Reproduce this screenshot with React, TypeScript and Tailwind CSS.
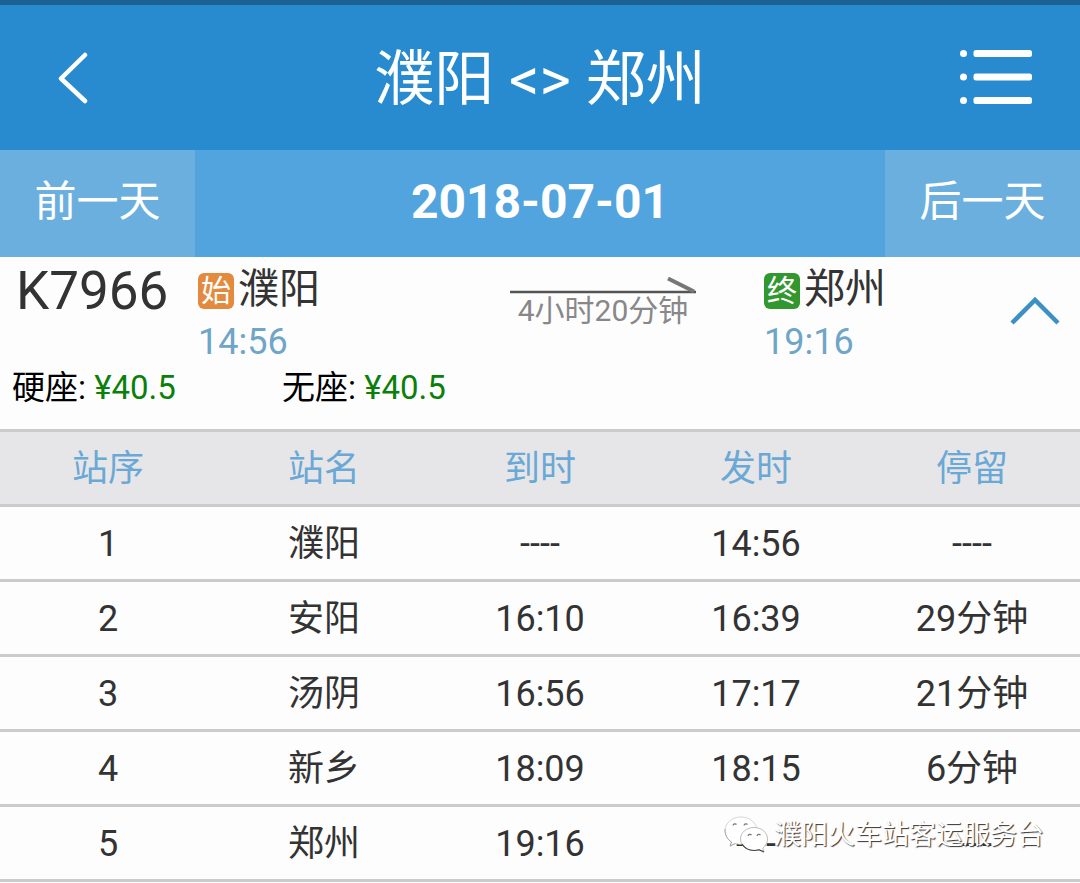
import { useState } from "react";

type Stop = {
  order: number;
  name: string;
  arrive: string;
  depart: string;
  stay: string;
};

const columns = ["站序", "站名", "到时", "发时", "停留"];

const stops: Stop[] = [
  { order: 1, name: "濮阳", arrive: "----", depart: "14:56", stay: "----" },
  { order: 2, name: "安阳", arrive: "16:10", depart: "16:39", stay: "29分钟" },
  { order: 3, name: "汤阴", arrive: "16:56", depart: "17:17", stay: "21分钟" },
  { order: 4, name: "新乡", arrive: "18:09", depart: "18:15", stay: "6分钟" },
  { order: 5, name: "郑州", arrive: "19:16", depart: "----", stay: "----" },
];

const seats = [
  { type: "硬座", price: "¥40.5" },
  { type: "无座", price: "¥40.5" },
];

function BackIcon() {
  return (
    <svg width="32" height="54" viewBox="0 0 32 54" fill="none" stroke="currentColor" strokeWidth="4.5" strokeLinecap="round" strokeLinejoin="round" aria-hidden="true">
      <path d="M29 4 L5 27.5 L29 50" />
    </svg>
  );
}

function MenuIcon() {
  return (
    <svg width="72" height="56" viewBox="0 0 72 56" fill="currentColor" aria-hidden="true">
      {[0, 23.5, 47].map((y) => (
        <g key={y}>
          <circle cx="3.5" cy={y + 3.5} r="3.5" />
          <rect x="13.5" y={y} width="58.5" height="7" rx="2.5" />
        </g>
      ))}
    </svg>
  );
}

function ArrowIcon() {
  return (
    <svg width="186" height="20" viewBox="0 0 186 20" fill="none" stroke="#555" aria-hidden="true">
      <path d="M0 15 H186" strokeWidth="2.6" />
      <path d="M158 1.5 L184 14.5" stroke="#777" strokeWidth="4" />
    </svg>
  );
}

function WechatIcon() {
  return (
    <svg width="46" height="40" viewBox="0 0 46 40" aria-hidden="true">
      <g fill="#fff" stroke="#999" strokeWidth="0.8" strokeLinejoin="round">
        <path d="M17 2 C8 2 1 8 1 16 C1 20.5 3.5 24.5 7.5 27 L6 31 L11.5 28.5 C13 29 15 29.3 17 29.3 C26 29.3 33 23.5 33 16 C33 8 26 2 17 2 Z" stroke="#ccc" />
        <path d="M30 12.5 C22.5 12.5 16.5 17.5 16.5 24 C16.5 30.5 22.5 35.5 30 35.5 C31.8 35.5 33.5 35.2 35 34.7 L40 37 L38.800 33 C41.500 31 43.500 27.800 43.500 24 C43.500 17.500 37.500 12.500 30 12.500 Z" stroke="#aaa" />
        <path d="M1 14 C1 20.500 3.500 24.500 7.500 27 L6 31 L11.500 28.500" fill="none" />
        <path d="M18 29 C20.500 33 25 35.500 30 35.500 C31.800 35.500 33.500 35.200 35 34.700 L40 37" fill="none" stroke="#444" strokeWidth="1.2" />
      </g>
      <g fill="none" stroke="#777" strokeWidth="1.2">
        <path d="M9 10.500 A2 2 0 0 1 12.500 9.500" />
        <path d="M20 10.500 A2 2 0 0 1 23.500 9.500" />
        <path d="M24 21 A2 2 0 0 1 27.500 20" />
        <path d="M33 21 A2 2 0 0 1 36.500 20" />
      </g>
    </svg>
  );
}

function Station({ badge, badgeColor, name, time }: { badge: string; badgeColor: string; name: string; time: string }) {
  return (
    <div>
      <div className="flex h-[60px] items-end gap-1">
        <span className={`mb-2 flex size-9 items-center justify-center rounded-md text-[30px] leading-9 text-white ${badgeColor}`}>
          {badge}
        </span>
        <span className="text-[41px] leading-[56px] text-[#333]">{name}</span>
      </div>
      <div className="text-4xl leading-[50px] text-[#6fa5c6]">{time}</div>
    </div>
  );
}

export default function App() {
  const [open, setOpen] = useState(true);

  return (
    <div className="relative min-h-screen bg-[#fdfdfd] font-['Roboto','Noto_Sans_CJK_SC',sans-serif]" lang="zh-CN">
      {/* Title bar */}
      <header className="flex h-[150px] items-center border-t-[5px] border-[#1c6193] bg-[#298bcf] pr-12 pl-14 text-white">
        <button type="button" aria-label="返回" className="flex w-16">
          <BackIcon />
        </button>
        <h1 className="flex-1 pt-1 text-center text-6xl leading-none">濮阳 &lt;&gt; 郑州</h1>
        <button type="button" aria-label="菜单" className="flex">
          <MenuIcon />
        </button>
      </header>

      {/* Date switcher */}
      <div className="flex h-[107px] bg-[#52a4df] text-white">
        <button type="button" className="w-[195px] bg-[#6bafdf] pb-1 text-[42px]">
          前一天
        </button>
        <div className="flex flex-1 items-center justify-center pb-1 text-5xl font-bold">2018-07-01</div>
        <button type="button" className="w-[195px] bg-[#6bafdf] pb-1 text-[42px]">
          后一天
        </button>
      </div>

      {/* Train summary */}
      <section className="h-[172px]">
        <div className="flex h-[111px] pr-5 pl-4">
          <h2 className="w-[182px] text-[53px] leading-[68px] text-[#333]">K7966</h2>
          <Station badge="始" badgeColor="bg-[#e48a3e]" name="濮阳" time="14:56" />
          <div className="flex flex-1 flex-col items-end pt-5">
            <div className="mr-[68px] flex flex-col items-center">
              <ArrowIcon />
              <span className="text-3xl leading-7 text-[#888]">4小时20分钟</span>
            </div>
          </div>
          <Station badge="终" badgeColor="bg-[#33972f]" name="郑州" time="19:16" />
          <div className="flex w-[174px] justify-end pt-9">
            <button type="button" aria-label="展开经停站" aria-expanded={open} onClick={() => setOpen(!open)} className="h-9">
              <svg width="50" height="36" viewBox="0 0 50 36" fill="none" stroke="#3d8fc6" strokeWidth="4.5" aria-hidden="true">
                <path d={open ? "M2 30 L25 7 L48 30" : "M2 7 L25 30 L48 7"} />
              </svg>
            </button>
          </div>
        </div>
        <div className="flex pl-3 text-[33px] leading-10 text-black">
          {seats.map((seat) => (
            <div key={seat.type} className="w-[270px]">
              {seat.type}: <span className="text-[#0a800a]">{seat.price}</span>
            </div>
          ))}
        </div>
      </section>

      {/* Stops */}
      {open && (
        <table className="w-full table-fixed border-collapse text-center text-4xl text-[#333]">
          <thead>
            <tr className="h-[75px] border-y-[3px] border-[#cbcbcc] bg-[#e6e6e8] text-[#6aa8d6]">
              {columns.map((column) => (
                <th key={column} scope="col" className="p-0 pt-px font-normal">
                  {column}
                </th>
              ))}
            </tr>
          </thead>
          <tbody>
            {stops.map((stop) => (
              <tr key={stop.order} className="h-[75px] border-b-[3px] border-[#cbcbcc]">
                <td className="p-0 pt-px">{stop.order}</td>
                <td className="p-0 pt-px">{stop.name}</td>
                <td className="p-0 pt-px">{stop.arrive}</td>
                <td className="p-0 pt-px">{stop.depart}</td>
                <td className="p-0 pt-px">{stop.stay}</td>
              </tr>
            ))}
          </tbody>
        </table>
      )}

      {/* Account watermark, lies over the last row */}
      <div className="absolute right-9 bottom-7 flex items-center gap-1">
        <WechatIcon />
        <span className="text-[27px] leading-10 text-white [text-shadow:1px_1px_1px_#333]">濮阳火车站客运服务台</span>
      </div>
    </div>
  );
}
